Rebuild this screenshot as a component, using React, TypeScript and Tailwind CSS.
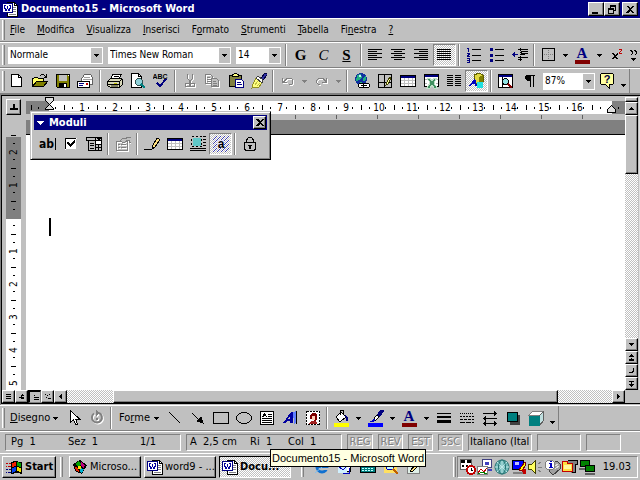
import React from "react";

type Kids = { children?: React.ReactNode };

const raised =
  "border border-t-white border-l-white border-r-black border-b-black shadow-[inset_-1px_-1px_0_#808080]";
const sunken = "border border-t-[#808080] border-l-[#808080] border-r-white border-b-white";
const dither =
  "bg-[conic-gradient(#fff_25%,#c0c0c0_0_50%,#fff_0_75%,#c0c0c0_0)] bg-[length:2px_2px]";

function Svg({ children, w = 16, h = 16 }: Kids & { w?: number; h?: number }) {
  return (
    <svg
      width={w}
      height={h}
      viewBox={`0 0 ${w} ${h}`}
      fill="none"
      shapeRendering="crispEdges"
      className="block shrink-0"
      aria-hidden="true"
    >
      {children}
    </svg>
  );
}

/* Shape drawn in grey with a white lower-right echo, as unavailable commands are. */
function Etched({ children }: Kids) {
  return (
    <>
      <g transform="translate(1 1)" className="text-white">
        {children}
      </g>
      <g className="text-[#808080]">{children}</g>
    </>
  );
}

function Tool({ label, pressed, disabled, children }: Kids & { label: string; pressed?: boolean; disabled?: boolean }) {
  return (
    <button
      type="button"
      aria-label={label}
      aria-pressed={pressed}
      disabled={disabled}
      className={`flex h-[22px] w-[23px] shrink-0 items-center justify-center ${pressed ? `${sunken} ${dither}` : ""}`}
    >
      {children}
    </button>
  );
}

function Down({ grey }: { grey?: boolean }) {
  return (
    <Svg w={5} h={3}>
      <path d="M0 0h5v1H4v1H3v1H2V2H1V1H0z" fill={grey ? "#808080" : "#000"} />
    </Svg>
  );
}

function More({ label, grey }: { label: string; grey?: boolean }) {
  return (
    <button type="button" aria-label={label} disabled={grey} className="flex h-[22px] w-[11px] shrink-0 items-center justify-center">
      <Down grey={grey} />
    </button>
  );
}

function Sep() {
  return <div className="mx-0.5 h-[22px] w-0.5 shrink-0 border-l border-r border-l-[#808080] border-r-white" />;
}

function Grip() {
  return <div className="h-5 w-[3px] shrink-0 border-l border-r border-l-white border-r-[#808080]" />;
}

function Bar({ label, children }: Kids & { label: string }) {
  return (
    <div
      role="toolbar"
      aria-label={label}
      className="flex h-[26px] shrink-0 items-center border-t border-b border-t-white border-b-[#808080] pl-0.5"
    >
      {children}
    </div>
  );
}

function Combo({ label, value, width }: { label: string; value: string; width: string }) {
  return (
    <div className={`flex h-[17px] shrink-0 items-center bg-white p-px ${width}`}>
      <select
        aria-label={label}
        className="h-[15px] min-w-0 flex-1 appearance-none bg-white pl-px text-[10px] leading-[14px] outline-none"
        defaultValue={value}
      >
        <option>{value}</option>
      </select>
      <span className="pointer-events-none flex h-[15px] w-[11px] items-center justify-center bg-[#c0c0c0]">
        <Down />
      </span>
    </div>
  );
}

function WordIcon() {
  return (
    <Svg>
      <path d="M5.5 1.5h7l3 3v11h-10z" fill="#fff" stroke="#000" />
      <path d="M12.5 1v3.5h3" stroke="#000" />
      <path d="M11 6.5h3M11 8.5h3M11 10.5h3M7 13.5h7" stroke="#808080" />
      <path d="M.5 2.5h10v9H.5z" fill="#fff" stroke="#000080" />
      <path d="M2 4h2v1h-1v2h1v1h1V5h1v3h1V7h1V5H7V4h2v1H9v3H8v2H6V8H5v2H3V8H2z" fill="#0000a0" />
    </Svg>
  );
}

/* ---------- alignment and list glyphs ---------- */

function Lines({ rows }: { rows: [number, number][] }) {
  return (
    <Svg w={15} h={12}>
      {rows.map(([x, w], i) => (
        <rect key={i} x={x} y={i * 2} width={w} height={1} fill="#000" />
      ))}
    </Svg>
  );
}

function FontColour() {
  return (
    <Svg w={17} h={17}>
      <text x="8" y="11" textAnchor="middle" fontFamily="Liberation Serif, serif" fontWeight="bold" fontSize="15" fill="#000080">A</text>
      <rect x="1" y="13" width="15" height="4" fill="#800000" />
    </Svg>
  );
}

function GridTable() {
  return (
    <Svg>
      <path d="M.5 2.5h15v11H.5z" fill="#fff" stroke="#000" />
      <path d="M1 3h14v2H1z" fill="#000080" />
      <path d="M1 7.5h14M1 10.5h14M4.5 5v8M8.5 5v8M12.5 5v8" stroke="#c0c0c0" />
    </Svg>
  );
}

/* ---------- window parts ---------- */

function CaptionButton({ label, children }: Kids & { label: string }) {
  return (
    <button type="button" aria-label={label} className={`flex h-[14px] w-4 items-center justify-center bg-[#c0c0c0] ${raised}`}>
      {children}
    </button>
  );
}

function TitleBar() {
  return (
    <header className="flex h-[18px] shrink-0 items-center bg-[#000080] pr-0.5 pl-0.5 text-white">
      <WordIcon />
      <h1 className="ml-[3px] flex-1 text-[11px] leading-[14px] font-bold">Documento15 - Microsoft Word</h1>
      <CaptionButton label="Riduci a icona">
        <Svg w={10} h={9}><path d="M1 7h6v2H1z" fill="#000" /></Svg>
      </CaptionButton>
      <CaptionButton label="Ripristina">
        <Svg w={10} h={9}><path d="M3 0h6v6H7V5h1V2H4v1H3zM1 3h6v6H1zm1 2v3h4V5z" fill="#000" fillRule="evenodd" /></Svg>
      </CaptionButton>
      <div className="w-0.5" />
      <CaptionButton label="Chiudi">
        <Svg w={10} h={9}><path d="M1 1h2l2 2 2-2h2L6 4l3 4H7L5 6 3 8H1l3-4z" fill="#000" /></Svg>
      </CaptionButton>
    </header>
  );
}

const menus: [string, string, string][] = [
  ["", "F", "ile"],
  ["", "M", "odifica"],
  ["", "V", "isualizza"],
  ["", "I", "nserisci"],
  ["F", "o", "rmato"],
  ["", "S", "trumenti"],
  ["", "T", "abella"],
  ["Fi", "n", "estra"],
  ["", "?", ""],
];

function MenuBar() {
  return (
    <nav className="flex h-6 shrink-0 items-center border-t border-b border-t-white border-b-[#808080] pl-0.5">
      <Grip />
      <div className="ml-[5px] flex gap-3">
        {menus.map(([a, b, c]) => (
          <button key={a + b + c} type="button" className="leading-[14px]">
            {a}
            <u className="underline-offset-1">{b}</u>
            {c}
          </button>
        ))}
      </div>
    </nav>
  );
}

function FormatBar() {
  return (
    <Bar label="Formattazione">
      <Grip />
      <div className="mr-0.5 ml-[3px] flex gap-[5px]">
        <Combo label="Stile" value="Normale" width="w-[95px]" />
        <Combo label="Tipo di carattere" value="Times New Roman" width="w-[123px]" />
        <Combo label="Dimensione carattere" value="14" width="w-[45px]" />
      </div>
      <Sep />
      <Tool label="Grassetto"><b className="font-['Liberation_Serif',serif] text-[15px] leading-4">G</b></Tool>
      <Tool label="Corsivo"><i className="font-['Liberation_Serif',serif] text-[15px] leading-4">C</i></Tool>
      <Tool label="Sottolineato"><b className="font-['Liberation_Serif',serif] text-[15px] leading-4 underline">S</b></Tool>
      <Sep />
      <Tool label="Allinea a sinistra"><Lines rows={[[0, 14], [0, 9], [0, 14], [0, 9], [0, 14], [0, 9]]} /></Tool>
      <Tool label="Centra"><Lines rows={[[0, 14], [3, 8], [0, 14], [3, 8], [0, 14], [3, 8]]} /></Tool>
      <Tool label="Allinea a destra"><Lines rows={[[0, 14], [5, 9], [0, 14], [5, 9], [0, 14], [5, 9]]} /></Tool>
      <Tool label="Giustifica" pressed><Lines rows={[[0, 14], [0, 14], [0, 14], [0, 14], [0, 14], [0, 14]]} /></Tool>
      <Sep />
      <Tool label="Elenco numerato">
        <Svg>
          <path d="M6 2.5h9M6 8.5h9M6 13.5h9" stroke="#000" />
          <path d="M1 1h2v4H2V2H1zM1 6h3v2H3v1h1v1H1V8h1V7H1zM1 11h3v5H1v-1h2v-1H1v-1h2v-1H1z" fill="#000080" />
        </Svg>
      </Tool>
      <Tool label="Elenco puntato">
        <Svg>
          <path d="M6 2.5h9M6 8.5h9M6 13.5h9" stroke="#000" />
          <path d="M1 1h3v3H1zM1 7h3v3H1zM1 12h3v3H1z" fill="#000080" />
        </Svg>
      </Tool>
      <Tool label="Riduci rientro">
        <Svg>
          <path d="M6 2.5h10M9 4h7v2H9zM6 10.5h10M9 7.5h4M6 12.5h4" stroke="#000" />
          <path d="M8.500 1v14" stroke="#000" strokeDasharray="1 1" />
          <path d="M0 7h1V6h1V5h1v2h3v1H3v2H2V9H1V8H0z" fill="#000080" />
        </Svg>
      </Tool>
      <Sep />
      <Tool label="Bordo esterno">
        <Svg>
          <path d="M1.5 1.5h12v12h-12z" stroke="#000" />
          <path d="M7.5 3v10M3 7.5h10" stroke="#808080" strokeDasharray="1 1" />
        </Svg>
      </Tool>
      <More label="Altri bordi" />
      <Tool label="Colore carattere"><FontColour /></Tool>
      <More label="Altri colori carattere" />
      <Tool label="Apice">
        <Svg>
          <path d="M2 6h2l2 2 2-2h1v1L7 9l2 3H7l-1-2-2 2H2l3-3z" fill="#000" />
          <path d="M10 3V2h3v2h-1v1h-1v1h2v1h-3V5h1V4h1V3z" fill="#c00000" />
        </Svg>
      </Tool>
      <button type="button" aria-label="Altri pulsanti" className="flex w-[11px] flex-col items-center gap-[3px]">
        <Svg w={8} h={5}><path d="M0 0h1l2 2v1L1 5H0l2-2zM4 0h1l2 2v1L5 5H4l2-2z" fill="#000" /></Svg>
        <Down />
      </button>
    </Bar>
  );
}

function StandardBar() {
  return (
    <Bar label="Standard">
      <Grip />
      <Tool label="Nuovo">
        <Svg>
          <path d="M2.5 1.5h7l3 3v9h-10z" fill="#fff" stroke="#000" />
          <path d="M9.5 1.5v3h3" stroke="#000" />
        </Svg>
      </Tool>
      <Tool label="Apri">
        <Svg>
          <path d="M.5 13.5v-8h1l1-1h3l1 1h5v3" fill="#ff6" stroke="#000" />
          <path d="M.5 13.5l4-5h11l-4 5z" fill="#808000" stroke="#000" />
          <path d="M8 2h1V1h3v1h1v1h1V1h1v4h-3V4h1V3h-1V2H9v1H8z" fill="#000" />
        </Svg>
      </Tool>
      <Tool label="Salva">
        <Svg>
          <path d="M1.5 1.5h13v13h-12l-1-1z" fill="#808000" stroke="#000" />
          <path d="M4 2h8v6H4z" fill="#c0c0c0" />
          <path d="M4 10h8v5H4z" fill="#000" />
          <path d="M9 11h2v3H9zM13 2h1v1h-1z" fill="#fff" />
        </Svg>
      </Tool>
      <Tool label="Posta elettronica">
        <Svg w={17}>
          <path d="M4.5 6l3-4.5h6l2 3v7h-11z" fill="#fff" stroke="#606060" />
          <path d="M7 4.5h6M6 6.5h9" stroke="#a0a0a0" />
          <path d="M.5 8.5h12v6H.5z" fill="#fff" stroke="#000" />
          <path d="M2 10.5h5M2 12.5h4" stroke="#000080" />
          <path d="M9 10h2v2H9z" fill="#c00000" />
        </Svg>
      </Tool>
      <Sep />
      <Tool label="Stampa">
        <Svg>
          <path d="M4 6l2-5h8l-2 5z" fill="#fff" />
          <path d="M3.5 6l2.500-4.500h8l-2 4.500" stroke="#000" />
          <path d="M7 3.5h5" stroke="#000" />
          <path d="M.5 8.5l3-3h11l1 2v4l-3 3h-9l-3-2z" fill="#d8d8b8" stroke="#000" />
          <path d="M1 8.5h11v5M12 8.5l3-2M1 11.5h11" stroke="#000" />
          <path d="M7 10h3v1H7z" fill="#c0c000" />
          <path d="M4 12h7v2H4z" fill="#808060" />
        </Svg>
      </Tool>
      <Tool label="Anteprima di stampa">
        <Svg>
          <path d="M1.5.5h7l3 3v11h-10z" fill="#fff" stroke="#000" />
          <path d="M8.5.5v3h3" stroke="#000" />
          <circle cx="9" cy="9" r="3.5" fill="#8fd0d8" stroke="#305050" />
          <path d="M11 11l4 4" stroke="#008080" strokeWidth="2" />
        </Svg>
      </Tool>
      <Tool label="Controllo ortografia">
        <Svg>
          <text x="7" y="6" textAnchor="middle" fontFamily="Liberation Sans, sans-serif" fontWeight="bold" fontSize="7" fill="#000">ABC</text>
          <path d="M4 10l3 3 6-7" stroke="#000080" strokeWidth="2" />
        </Svg>
      </Tool>
      <Sep />
      <Tool label="Taglia" disabled>
        <Svg>
          <Etched>
            <path d="M5.5 1v4l4 6M10.5 1v4l-4 6" stroke="currentColor" />
            <circle cx="5.5" cy="12" r="2" stroke="currentColor" />
            <circle cx="10.5" cy="12" r="2" stroke="currentColor" />
          </Etched>
        </Svg>
      </Tool>
      <Tool label="Copia" disabled>
        <Svg>
          <Etched>
            <path d="M.5 1.5h5l2 2v7h-7zM2 4.5h3M2 6.5h4M2 8.5h4" stroke="currentColor" />
            <path d="M6.5 5.5h5l2 2v6h-7z" fill="#c0c0c0" stroke="currentColor" />
            <path d="M8 8.5h3M8 10.5h4M8 12.5h4" stroke="currentColor" />
          </Etched>
        </Svg>
      </Tool>
      <Tool label="Incolla">
        <Svg>
          <path d="M1.5 2.5h12v11h-12z" fill="#808040" stroke="#000" />
          <path d="M4.5 3.5v-2h1l1-1h2l1 1h1v2z" fill="#ffff80" stroke="#000" />
          <path d="M7.5 6.5h6l2 2v6h-8z" fill="#fff" stroke="#000080" />
          <path d="M9 9.5h4M9 11.5h5" stroke="#000080" />
        </Svg>
      </Tool>
      <Tool label="Copia formato">
        <Svg>
          <path d="M14 0h2v2l-4 5-2-2z" fill="#3030a0" stroke="#000040" />
          <path d="M5 5l6 5-3 4-7 1 1-4z" fill="#ffff80" stroke="#909020" />
          <path d="M7 3l5 4-1 3-6-5z" fill="#fff" stroke="#404040" />
          <path d="M4 12l3-4M6 13l3-3" stroke="#c0c040" />
        </Svg>
      </Tool>
      <Sep />
      <Tool label="Annulla" disabled>
        <Svg>
          <Etched><path d="M2 5h1v3l3-3h5l2 2v3l-2 2H9v-1h2l1-1V7l-1-1H7L4 9h3v1H2z" fill="currentColor" /></Etched>
        </Svg>
      </Tool>
      <More label="Elenco annulla" grey />
      <Tool label="Ripeti" disabled>
        <Svg>
          <Etched><path d="M13 5h-1v3L9 5H4L2 7v3l2 2h2v-1H4l-1-1V7l1-1h4l3 3H8v1h5z" fill="currentColor" /></Etched>
        </Svg>
      </Tool>
      <More label="Elenco ripeti" grey />
      <Sep />
      <Tool label="Inserisci collegamento ipertestuale">
        <Svg>
          <circle cx="7" cy="6" r="6" fill="#1030a0" />
          <path d="M3 2l4-1 1 3-3 3-3 1zM9 5l3-2v4l-3 1zM6 9l3 1-2 2z" fill="#20b080" />
          <path d="M5 2h2v2H5z" fill="#c0f0ff" />
          <rect x="4.5" y="10.5" width="6" height="4" rx="2" fill="#fff" stroke="#000" />
          <rect x="9.5" y="10.5" width="6" height="4" rx="2" fill="#fff" stroke="#000" />
          <path d="M7 12.5h6" stroke="#000" />
        </Svg>
      </Tool>
      <Tool label="Tabelle e bordi">
        <Svg>
          <path d="M1.5 1.5h13v13h-13zM7.5 2v12M2 9.5h12" stroke="#000" />
          <path d="M9 12l1-3 3-5 1 1-3 6z" fill="#ffffa0" stroke="#404000" />
        </Svg>
      </Tool>
      <Tool label="Inserisci tabella"><GridTable /></Tool>
      <Tool label="Inserisci foglio di Microsoft Excel">
        <Svg>
          <path d="M1.5 1.5h14v12h-14z" fill="#fff" stroke="#000" />
          <path d="M2 2h13v2H2z" fill="#000080" />
          <path d="M2 6.5h2M2 10.5h2M13 6.500h2M13 10.500h2" stroke="#b0b0b0" />
          <path d="M4 5h3l2 3 2-3h3l-3 5 3 5h-3l-2-3-2 3H4l3-5z" fill="#409060" stroke="#c0e0c8" />
        </Svg>
      </Tool>
      <Tool label="Colonne">
        <Svg>
          <path d="M1 2.5h6M1 4.5h6M1 6.5h6M1 8.5h6M1 10.5h6M1 12.5h6M9 2.5h6M9 4.5h6M9 6.5h6M9 8.5h6M9 10.5h6M9 12.5h6" stroke="#000" />
        </Svg>
      </Tool>
      <Tool label="Disegno" pressed>
        <Svg>
          <path d="M5 2l5-2 4 2v7l-5 2-4-2z" fill="#e0d840" stroke="#606000" />
          <path d="M10 4l4-2v7l-4 2z" fill="#808000" />
          <path d="M0 13L6 5l2 8H6v-2H3l-1 2z" fill="#0000c0" />
          <circle cx="11" cy="12" r="3.5" fill="#20e0e0" />
        </Svg>
      </Tool>
      <Sep />
      <Tool label="Mappa documento">
        <Svg>
          <path d="M.5 1.5h14v13H.5z" fill="#fff" stroke="#000" />
          <path d="M1 2h13v2H1z" fill="#000080" />
          <path d="M4.5 4v10" stroke="#000" />
          <circle cx="7.5" cy="8.5" r="3" fill="#8fe0e0" stroke="#000" />
          <path d="M10 11l4 4" stroke="#800000" strokeWidth="2" />
        </Svg>
      </Tool>
      <Tool label="Mostra/Nascondi">
        <Svg><path d="M5 2h9v1h-1v11h-1V3h-2v11H9V8H6V7H5V6H4V3h1z" fill="#000" /></Svg>
      </Tool>
      <div className="ml-[3px]">
        <Combo label="Zoom" value="87%" width="w-[52px]" />
      </div>
      <Tool label="Guida in linea">
        <Svg>
          <path d="M2.5.5h11l1 1v9l-1 1h-3v4l-4-4h-4l-1-1v-9z" fill="#ffffa0" stroke="#000" />
          <text x="8" y="10" textAnchor="middle" fontFamily="Liberation Sans, sans-serif" fontWeight="bold" fontSize="11" fill="#000040">?</text>
        </Svg>
      </Tool>
      <div className="mt-2"><More label="Opzioni barra Standard" /></div>
      <div className="h-full w-px bg-[#808080]" />
    </Bar>
  );
}

/* ---------- rulers ---------- */

function HorizontalRuler() {
  return (
    <div className="relative mt-[5px] flex h-[13px] shrink-0 bg-white text-[10px]">
      <div className="flex w-[23px] shrink-0 items-center justify-around bg-[#808080] pl-0.5">
        <i className="h-[5px] w-px bg-black" />
        <i className="h-0.5 w-px bg-black" />
        <i className="w-px" />
      </div>
      <div className="flex min-w-0 flex-1 overflow-hidden">
        {Array.from({ length: 17 }, (_, i) => (
          <div key={i} className="flex w-[33px] shrink-0 items-center">
            <i className="ml-1.5 h-0.5 w-px shrink-0 bg-black" />
            <i className="ml-2 h-[5px] w-px shrink-0 bg-black" />
            <i className="ml-[7px] h-0.5 w-px shrink-0 bg-black" />
            <span className="-mr-3 ml-px flex w-4 shrink-0 justify-center leading-[13px]">{i < 16 ? i + 1 : ""}</span>
          </div>
        ))}
      </div>
      <div className="flex w-[13px] shrink-0 items-center justify-center bg-[#808080]">
        <i className="h-0.5 w-px bg-black" />
      </div>
      <div className="absolute -top-1 left-[18px]">
        <Svg w={11} h={16}>
          <path d="M1.5.5h8v3l-4 4-4-4z" fill="#e0e0e0" stroke="#000" />
          <path d="M5.5 7.5l4 4v1h-8v-1z" fill="#e0e0e0" stroke="#000" />
        </Svg>
      </div>
      <div className="absolute top-1 right-2">
        <Svg w={10} h={9}><path d="M4.5.5l4 4v3h-8v-3z" fill="#e0e0e0" stroke="#000" /></Svg>
      </div>
    </div>
  );
}

function VerticalMarks({ labels, pad }: { labels: string[]; pad: string }) {
  return (
    <div className={`flex flex-col items-center text-[10px] ${pad}`}>
      {labels.map((n, i) => (
        <div key={i} className="flex h-[33px] w-full shrink-0 flex-col items-center">
          <i className="mt-1.5 h-px w-0.5 shrink-0 bg-black" />
          <i className="mt-2 h-px w-[5px] shrink-0 bg-black" />
          <i className="mt-[7px] h-px w-0.5 shrink-0 bg-black" />
          <span className="mt-[3px] h-2.5 w-3 shrink-0 -rotate-90 text-center leading-[10px]">{n}</span>
        </div>
      ))}
    </div>
  );
}

function LeftColumn() {
  return (
    <div className="flex w-6 shrink-0 flex-col overflow-hidden pt-[3px] pr-[5px] pl-1">
      <button type="button" aria-label="Tabulazione" className={`flex h-4 shrink-0 items-center justify-center ${raised}`}>
        <Svg w={8} h={6}><path d="M3 0h2v4h3v2H0V4h3z" fill="#000" /></Svg>
      </button>
      <div className="flex h-[22px] shrink-0 items-end justify-center pb-px">
        <i className="h-px w-[5px] bg-black" />
      </div>
      <div className="h-[82px] shrink-0 overflow-hidden bg-[#808080]">
        <VerticalMarks labels={["2", "1", ""]} pad="-mt-[17px]" />
      </div>
      <div className="min-h-0 flex-1 overflow-hidden bg-white">
        <VerticalMarks labels={["1", "2", "3", "4", "5"]} pad="" />
      </div>
    </div>
  );
}

/* ---------- scroll bars ---------- */

function ScrollButton({ label, d, pressed }: { label: string; d: string; pressed?: boolean }) {
  return (
    <button
      type="button"
      aria-label={label}
      className={`flex h-[13px] w-[13px] shrink-0 items-center justify-center bg-[#c0c0c0] ${pressed ? "border-2 border-r border-b border-black border-r-[#808080] border-b-[#808080]" : raised}`}
    >
      <Svg w={7} h={7}><path d={d} fill="#000" /></Svg>
    </button>
  );
}

function VerticalScroll() {
  return (
    <div className="flex w-[15px] shrink-0 flex-col border-r border-[#e0e0e0] pr-px">
      <div className={`mt-px h-[5px] shrink-0 ${raised}`} />
      <ScrollButton label="Scorri su" d="M3 2h1v1h1v1h1v1H1V4h1V3h1z" />
      <div className={`h-[59px] shrink-0 bg-[#c0c0c0] ${raised}`} />
      <div className={`min-h-0 flex-1 ${dither}`} />
      <ScrollButton label="Scorri giù" d="M1 2h5v1H5v1H4v1H3V4H2V3H1z" />
      <ScrollButton label="Pagina precedente" d="M3 0h1v1h1v1h1v1H1V2h1V1h1zM3 4h1v1h2v2H1V5h2z" />
      <ScrollButton label="Seleziona oggetto da sfogliare" d="M5 1h1v4H5v1H1V5h3V4h1z" />
      <ScrollButton label="Pagina successiva" d="M1 1h5v1H4v2h2v1H5v1H4v1H3V6H2V5H1V4h2V2H1z" />
    </div>
  );
}

function HorizontalScroll() {
  return (
    <div className="flex h-[13px] shrink-0">
      <ScrollButton label="Visualizzazione Normale" d="M1 1h5v1H1zM1 3h5v1H1zM1 5h5v1H1z" />
      <ScrollButton label="Visualizzazione Web" d="M4 1h1v1h1v1H4v1h2v2H3V5H1V4h2V2h1z" />
      <ScrollButton label="Layout di stampa" pressed d="M2 1h1v1H2zM2 3h5v1H2zM2 5h5v1H2z" />
      <ScrollButton label="Visualizzazione Struttura" d="M1 1h1v1H1zM3 2h1v1H3zM5 1h1v1H5zM2 4h1v1H2zM4 5h3v1H4z" />
      <ScrollButton label="Scorri a sinistra" d="M4 1h1v5H4V5H3V4H2V3h1V2h1z" />
      <div className={`w-[46px] shrink-0 ${dither}`} />
      <div className={`min-w-0 flex-1 bg-[#c0c0c0] ${raised}`} />
      <div className={`w-[54px] shrink-0 ${dither}`} />
      <ScrollButton label="Scorri a destra" d="M2 1h1v1h1v1h1v1H4v1H3v1H2z" />
      <div className="w-[15px] shrink-0" />
    </div>
  );
}

/* ---------- floating forms palette ---------- */

function FormsPalette() {
  return (
    <section aria-label="Moduli" className="absolute top-[15px] left-7 flex h-[49px] w-[241px] flex-col border border-t-[#c0c0c0] border-l-[#c0c0c0] border-r-black border-b-black bg-[#c0c0c0] p-0.5 shadow-[inset_1px_1px_0_#fff,inset_-1px_-1px_0_#808080]">
      <div className="m-px flex h-[15px] shrink-0 items-center bg-[#000080] pr-px pl-[3px] text-white">
        <Svg w={7} h={4}><path d="M0 0h7v1H6v1H5v1H4v1H3V3H2V2H1V1H0z" fill="#fff" /></Svg>
        <h2 className="ml-[5px] flex-1 text-[11px] leading-[14px] font-bold">Moduli</h2>
        <button type="button" aria-label="Chiudi Moduli" className={`flex h-[13px] w-[13px] items-center justify-center bg-[#c0c0c0] ${raised}`}>
          <Svg w={8} h={7}><path d="M0 0h2l2 2 2-2h2L5 3.5 8 7H6L4 5 2 7H0l3-3.5z" fill="#000" /></Svg>
        </button>
      </div>
      <div role="toolbar" aria-label="Controlli modulo" className="flex flex-1 items-center pl-[3px]">
        <Tool label="Campo testo"><span className="flex text-[12px] leading-4"><b>ab</b><i className="mt-0.5 ml-px h-3 w-px shrink-0 bg-black" /></span></Tool>
        <Tool label="Casella di controllo">
          <Svg>
            <path d="M2 2h12v12H2z" fill="#fff" />
            <path d="M2.5 13V2.5H13" stroke="#000" />
            <path d="M13.5 3v10.5H3" stroke="#c0c0c0" />
            <path d="M4 6h1l2 2 4-4h1v3l-5 4-3-3z" fill="#000" />
          </Svg>
        </Tool>
        <Tool label="Casella di riepilogo">
          <Svg>
            <path d="M.5 1.5h15v3H.5zM2.5 4.5h13v10h-13zM9.5 1v13M9 8.5h6M9 11.5h6M12.5 9v5" stroke="#000" />
            <path d="M11 2h4v1h-1v1h-2V3h-1zM4 7h4v1H4zM4 9h4v1H4zM4 12h4v1H4z" fill="#000" />
            <path d="M10 5h5v3h-5z" fill="#fff" />
          </Svg>
        </Tool>
        <Sep />
        <Tool label="Opzioni campo modulo" disabled>
          <Svg>
            <Etched>
              <path d="M1.5 5.5h11v9h-11zM3 8.5h2M3 11.5h2M6 8.5h5M6 11.5h5" stroke="currentColor" />
              <path d="M5 5l3-3h3V1h5v5h-2V4h-2l-3 3z" fill="#c0c0c0" stroke="currentColor" />
            </Etched>
          </Svg>
        </Tool>
        <Sep />
        <Tool label="Disegna tabella">
          <Svg>
            <path d="M0 13.5h8" stroke="#000" />
            <path d="M8 13l1-4 4-7 2 1v2l-4 6z" fill="#ffe080" stroke="#000" />
          </Svg>
        </Tool>
        <Tool label="Inserisci tabella modulo"><GridTable /></Tool>
        <Tool label="Inserisci cornice">
          <Svg>
            <path d="M3 2h8v8H3z" fill="#60c8c8" />
            <path d="M1.5.5h10v10h-10z" stroke="#000" strokeDasharray="2 2" />
            <path d="M13 .5h3M13 3.5h3M13 6.5h3M13 9.5h3M0 12.5h16M0 14.5h16" stroke="#000" />
          </Svg>
        </Tool>
        <Tool label="Ombreggiatura campi" pressed>
          <Svg>
            <path d="M0 4l4-4M0 8l8-8M0 12L12 0M0 16L16 0M4 16L16 4M8 16l8-8M12 16l4-4" stroke="#4040b0" />
            <path d="M4 4h7v8H4z" fill="#e0e0f8" />
            <text x="8" y="12" textAnchor="middle" fontFamily="Liberation Sans, sans-serif" fontWeight="bold" fontSize="12" fill="#000">a</text>
          </Svg>
        </Tool>
        <Sep />
        <Tool label="Proteggi modulo">
          <Svg>
            <path d="M4.5 7V4l2-2.5h3l2 2.5v3" stroke="#000" />
            <path d="M2.5 6.5h11v6l-1 2h-9l-1-2z" stroke="#000" />
            <path d="M6 9h4v1H9v3H7v-3H6z" fill="#000" />
          </Svg>
        </Tool>
      </div>
    </section>
  );
}

function Workspace() {
  return (
    <div className="flex min-h-0 flex-1 flex-col border-t border-l border-[#808080] pb-px">
      <div className="relative flex min-h-0 flex-1 flex-col border-t border-b border-l border-black">
        <div className="flex min-h-0 flex-1">
          <LeftColumn />
          <div className="flex min-w-0 flex-1 flex-col">
            <HorizontalRuler />
            <div className="flex h-1.5 shrink-0 items-center gap-10 overflow-hidden pl-16">
              {Array.from({ length: 13 }, (_, i) => (
                <i key={i} className="h-1 w-px shrink-0 bg-[#606060]" />
              ))}
            </div>
            <div className="h-[14px] shrink-0 bg-[#808080]" />
            <div
              role="textbox"
              aria-multiline="true"
              aria-label="Documento"
              tabIndex={0}
              className="min-h-0 flex-1 border-t border-black bg-white pt-[83px] pl-[23px] outline-none"
            >
              <div className="h-[18px] w-0.5 bg-black" />
            </div>
          </div>
          <VerticalScroll />
        </div>
        <HorizontalScroll />
        <FormsPalette />
      </div>
    </div>
  );
}

function DrawingBar() {
  return (
    <Bar label="Disegno">
      <Grip />
      <button type="button" className="flex w-[57px] shrink-0 items-center justify-between pr-1 pl-[5px] text-[11px] leading-[14px]">
        <span><u className="underline-offset-1">D</u>isegno</span>
        <Down />
      </button>
      <Tool label="Seleziona oggetti">
        <Svg><path d="M4.5.5v12l3-3 2 5h2l-2-5.5h4z" fill="#fff" stroke="#000" /></Svg>
      </Tool>
      <Tool label="Rotazione libera" disabled>
        <Svg>
          <Etched>
            <path d="M10 3a5 5 0 1 1-5 .5" stroke="currentColor" strokeWidth="2" shapeRendering="auto" />
            <path d="M7 0v6l4-3zM7 8h2v2H7z" fill="currentColor" />
          </Etched>
        </Svg>
      </Tool>
      <Sep />
      <button type="button" className="flex w-[49px] shrink-0 items-center justify-between pr-1 pl-[5px] text-[11px] leading-[14px]">
        <span>Fo<u className="underline-offset-1">r</u>me</span>
        <Down />
      </button>
      <Tool label="Linea"><Svg><path d="M2.5 2.5l11 11" stroke="#000" /></Svg></Tool>
      <Tool label="Freccia">
        <Svg><path d="M2 3l8 8" stroke="#000" /><path d="M7 11l4-4 2 6z" fill="#000" stroke="#000" /></Svg>
      </Tool>
      <Tool label="Rettangolo"><Svg><path d="M.5 2.5h15v11H.5z" stroke="#000" /></Svg></Tool>
      <Tool label="Ovale"><Svg><ellipse cx="8" cy="8" rx="7.5" ry="5.5" stroke="#000" /></Svg></Tool>
      <Tool label="Casella di testo">
        <Svg>
          <path d="M1.5 1.5h13v13h-13z" fill="#fff" stroke="#000" />
          <path d="M9 4.5h4M9 6.5h4M3 8.5h10M3 10.5h10M3 12.5h10" stroke="#000" />
          <path d="M3 7l2-4h1l2 4H7L6 6H5L4 7z" fill="#000" />
        </Svg>
      </Tool>
      <Tool label="Inserisci WordArt">
        <Svg>
          <path d="M1 13L9 2h2v11H8v-2H5l-1 2zM6 9h2V6z" fill="#0000a0" fillRule="evenodd" />
          <path d="M11 2l3-1v12l-2 1z" fill="#6080ff" />
          <path d="M14.5 1v13" stroke="#000" />
        </Svg>
      </Tool>
      <Tool label="Inserisci ClipArt">
        <Svg>
          <path d="M1 1h14v14H1z" fill="#fff" />
          <path d="M1.5 1.5h13v13h-13z" stroke="#000" strokeDasharray="2 1" />
          <path d="M5 5l2-2h3l2 2v4l-1 2H9v-1h1V6H7v3H5z" fill="#800000" />
          <path d="M7 6h3v4H7z" fill="#ffd0b8" />
          <path d="M4 14v-1l3-2h3l2 2v1z" fill="#a02020" />
        </Svg>
      </Tool>
      <Sep />
      <Tool label="Colore riempimento">
        <Svg w={17} h={17}>
          <path d="M3 7l5-5 5 5-5 4H6z" fill="#fff" stroke="#000" />
          <path d="M7.5 5V1l2-1 1 1v3" stroke="#000" />
          <path d="M12 5l3 2v4h-2V8z" fill="#000080" />
          <rect x="1" y="13" width="15" height="4" fill="#ff0" />
        </Svg>
      </Tool>
      <More label="Altri riempimenti" />
      <Tool label="Colore linea">
        <Svg w={17} h={17}>
          <path d="M14 0h2v2l-4 5-2-2z" fill="#000080" stroke="#000080" />
          <path d="M10 5l2 2-3 3H7V8z" fill="#fff" stroke="#000" />
          <path d="M2 11h2l2-2h2v1l-2 2H3z" fill="#0000c0" />
          <rect x="1" y="13" width="15" height="4" fill="#00f" />
        </Svg>
      </Tool>
      <More label="Altri colori linea" />
      <Tool label="Colore carattere disegno"><FontColour /></Tool>
      <More label="Altri colori testo" />
      <Tool label="Stile linea"><Svg><path d="M1 3h14v1H1zM1 6h14v2H1zM1 10h14v3H1z" fill="#000" /></Svg></Tool>
      <Tool label="Stile tratteggio">
        <Svg>
          <path d="M1 3.5h14" stroke="#000" strokeDasharray="1 1" />
          <path d="M1 6.5h14" stroke="#000" strokeDasharray="2 1" />
          <path d="M1 9.5h14" stroke="#000" strokeDasharray="3 1" />
          <path d="M1 12.5h14" stroke="#000" strokeDasharray="5 1" />
        </Svg>
      </Tool>
      <Tool label="Stile freccia">
        <Svg>
          <path d="M1 3.5h14M1 8.5h14M1 13.5h14" stroke="#000" />
          <path d="M12 1h1v1h1v1h1v1h-1v1h-1v1h-1zM4 6H3v1H2v1H1v1h1v1h1v1h1zM12 11h1v1h1v1h1v1h-1v1h-1v1h-1zM4 11H3v1H2v1H1v1h1v1h1v1h1z" fill="#000" />
        </Svg>
      </Tool>
      <Tool label="Ombreggiatura">
        <Svg>
          <path d="M5 5h10v10H5z" fill="#404040" />
          <path d="M2.5 2.5h10v9h-10z" fill="#008080" stroke="#000" />
        </Svg>
      </Tool>
      <Tool label="3D">
        <Svg>
          <path d="M.5 5.5l4-4h11l-4 4z" fill="#fff" stroke="#808080" />
          <path d="M11.5 5.5l4-4v9l-4 5z" fill="#c0e0e0" stroke="#606060" />
          <path d="M.5 5.5h11v10H.5z" fill="#008080" />
        </Svg>
      </Tool>
      <div className="mt-2"><More label="Opzioni barra Disegno" /></div>
      <div className="h-full w-px bg-[#808080]" />
    </Bar>
  );
}

function Pane({ children, width }: Kids & { width: string }) {
  return <div className={`flex h-[17px] shrink-0 items-center overflow-hidden whitespace-pre ${sunken} ${width}`}>{children}</div>;
}

function Flag({ children, width }: Kids & { width: string }) {
  return (
    <Pane width={width}>
      <span className="w-full text-center text-[11px] text-[#808080] [text-shadow:1px_1px_0_#fff]">{children}</span>
    </Pane>
  );
}

function StatusBar() {
  return (
    <footer className="flex h-[22px] shrink-0 items-center gap-[5px] border-t border-white pl-[5px] text-[11px]">
      <Pane width="w-[176px]">
        <span className="w-14 pl-[5px]">Pg  1</span>
        <span className="flex-1 pl-1.5">Sez  1</span>
        <span className="pr-6">1/1</span>
      </Pane>
      <Pane width="w-[156px]">
        <span className="w-[59px] pl-[3px]">A  2,5 cm</span>
        <span className="w-[42px] pl-1">Ri  1</span>
        <span>Col  1</span>
      </Pane>
      <Flag width="w-[26px]">REG</Flag>
      <Flag width="w-[25px]">REV</Flag>
      <Flag width="w-[25px]">EST</Flag>
      <Flag width="w-[25px]">SSC</Flag>
      <Pane width="w-16"><span className="pl-px">Italiano (Ital</span></Pane>
      <Pane width="w-[44px]" />
      <Pane width="w-[35px]" />
    </footer>
  );
}

function Task({ label, active, children }: Kids & { label: string; active?: boolean }) {
  return (
    <button
      type="button"
      aria-pressed={active}
      className={`flex h-[22px] w-[72px] shrink-0 items-center gap-0.5 pl-0.5 text-[11px] whitespace-nowrap ${
        active ? `border border-t-black border-l-black border-r-white border-b-white font-bold ${dither}` : raised
      }`}
    >
      {children}
      <span>{label}</span>
    </button>
  );
}

function Launch({ label, children }: Kids & { label: string }) {
  return (
    <button type="button" aria-label={label} className="flex w-[23px] shrink-0 justify-center">
      <Svg>{children}</Svg>
    </button>
  );
}

function Tray() {
  return (
    <div className={`flex h-[22px] shrink-0 items-center pr-1.5 pl-0.5 ${sunken}`}>
      <div className="flex gap-px">
        <Svg>
          <path d="M.5.5h11v10H.5z" fill="#fff" stroke="#606060" />
          <path d="M1 1h4v3H1zM7 1h4v3H7zM2 6h2v2H2zM6 6h2v2H6z" fill="#000" />
          <circle cx="11" cy="11" r="4" fill="#fff" stroke="#c00000" strokeWidth="2" />
          <path d="M11 9v2h2" stroke="#000" />
        </Svg>
        <Svg>
          <path d="M5.5.5h9v8h-9z" fill="#fff" stroke="#404080" />
          <path d="M8 3h4v3H8zM7 10h8v2H7z" fill="#4040c0" />
          <path d="M.5 7.5h10v8H.5z" fill="#fff" stroke="#808080" />
          <path d="M1 14l3-4 3 3 3-4" stroke="#c00000" />
          <path d="M1 15l4-2 5 2" stroke="#008000" />
        </Svg>
        <Svg>
          <g shapeRendering="auto">
            <circle cx="8" cy="8" r="7" fill="#70b8b8" stroke="#207070" />
            <path d="M1 8h14M3 3l10 10M13 3L3 13M8 1v14" stroke="#c0e8e8" />
            <ellipse cx="8" cy="8" rx="3.5" ry="7" stroke="#207070" />
          </g>
        </Svg>
        <Svg>
          <path d="M1.5 1.5h11v9h-11z" fill="#00f" stroke="#000" />
          <path d="M4 3h4v3H4z" fill="#c0c0ff" />
          <path d="M2 13h11v2H2z" fill="#808080" />
          <path d="M8 11l6-8 1 2-4 7z" fill="#ffff00" stroke="#800000" />
          <path d="M11 10h4v5h-3z" fill="#c00000" />
        </Svg>
        <Svg w={15}>
          <path d="M.5 5.5h3l4-4v13l-4-4h-3z" fill="#ffff60" stroke="#404000" />
          <path d="M10 5l3-2M10 8h4M10 11l3 2" stroke="#808080" />
        </Svg>
        <Svg w={17}>
          <path d="M8 5l5-3 3 3v5l-7 6-4-4z" fill="#a0a0a0" stroke="#404040" />
          <path d="M10 8l4-3M11 10l4-3" stroke="#e0e0e0" />
          <circle cx="6" cy="6" r="5" fill="#fff" stroke="#808080" />
          <path d="M6 2h2v1H6zM5 4h3v4h1v1H5V8h1V5H5z" fill="#0000c0" />
        </Svg>
        <Svg>
          <path d="M5.5 1.5h10v4h-2v8h-4" fill="#808080" stroke="#000" />
          <path d="M.5 4.5v-2h5v2h5v8H.5z" fill="#ffe040" stroke="#c00000" />
          <path d="M2 6h7v4H2z" fill="#fff8a0" />
        </Svg>
        <Svg>
          <path d="M1.5 1.5h9v6h-9z" fill="#008000" stroke="#000" />
          <path d="M0 9h9v2H0z" fill="#606060" />
          <path d="M6.5 6.5h9v6h-9z" fill="#008000" stroke="#000" />
          <path d="M6 14h10v2H6z" fill="#606060" />
        </Svg>
      </div>
      <time className="ml-2 text-[11px]">19.03</time>
    </div>
  );
}

function TaskBar() {
  return (
    <div className="relative flex h-[27px] shrink-0 items-center border-t border-white pr-0.5 pl-0.5">
      <button type="button" className={`flex h-[22px] w-[54px] shrink-0 items-center gap-0.5 pl-[3px] text-[11px] font-bold ${raised}`}>
        <Svg w={17}>
          <path d="M5 3l3-1 8 1v12l-5-1-6 1z" fill="#000" />
          <path d="M6 4l4-1v4l-4 1z" fill="#f02000" />
          <path d="M11 3l4 1v4l-4-1z" fill="#00a000" />
          <path d="M6 9l4-1v4l-4 2z" fill="#0040f0" />
          <path d="M11 8l4 1v4l-4-1z" fill="#f0e000" />
          <path d="M0 4h2v1H0zM3 4h2v1H3zM0 7h1v1H0zM2 7h3v1H2z" fill="#c00000" />
          <path d="M0 10h2v1H0zM3 10h2v1H3zM0 13h1v1H0zM2 13h3v1H2z" fill="#000080" />
        </Svg>
        Start
      </button>
      <div className="mr-1.5 ml-1"><Grip /></div>
      <div className="flex gap-[3px]">
        <Task label="Microso...">
          <Svg>
            <path d="M1 5l7-4 7 5-5 9-7-3z" fill="#000" />
            <path d="M3 5l4-3 2 3-3 3z" fill="#00a000" />
            <path d="M9 3l4 3-1 3-3-2z" fill="#c00080" />
            <path d="M3 8l3 1 1 4-3-1z" fill="#e02000" />
            <path d="M8 9l4 1-2 4-2-1z" fill="#00b0d0" />
            <path d="M6 7h3v3H6z" fill="#ffe000" />
          </Svg>
        </Task>
        <Task label="word9 - ..."><WordIcon /></Task>
        <Task label="Docu..." active><WordIcon /></Task>
      </div>
      <div className="ml-2.5"><Grip /></div>
      <div className="ml-1.5 flex min-w-0 flex-1">
        <Launch label="Internet Explorer">
          <g shapeRendering="auto">
            <circle cx="8" cy="8" r="5" stroke="#1070d0" strokeWidth="3" />
            <path d="M4 8h10" stroke="#1070d0" strokeWidth="2" />
            <path d="M10 9h5v2h-5z" fill="#c0c0c0" />
            <path d="M1 14L15 2" stroke="#80c0f0" />
          </g>
        </Launch>
        <Launch label="Outlook Express">
          <path d="M3.5 1.5h10v11h-10z" fill="#fff" stroke="#000" />
          <path d="M1 7h9v7H1z" fill="#d0f0ff" />
          <path d="M1 7l5 4 4-4M6 14h6V9" stroke="#0000c0" />
        </Launch>
        <Launch label="Mostra desktop">
          <path d="M.5 4.5h15v9H.5z" fill="#008080" stroke="#000" />
          <path d="M2 7.5h12M2 9.5h12M2 11.5h12" stroke="#c0ffff" strokeDasharray="2 1" />
        </Launch>
        <Launch label="Trova">
          <path d="M1 2h13v12H1z" fill="#ffe060" />
          <circle cx="7" cy="7" r="4" fill="#c0ffff" stroke="#0000c0" />
          <path d="M10 10l5 5" stroke="#c06000" strokeWidth="2" />
        </Launch>
        <Launch label="Blocco note">
          <path d="M1.5 2.5h12v12h-12z" fill="#e0f0e8" stroke="#808080" />
          <path d="M4 12l7-8 2 2-7 7z" fill="#ffe080" stroke="#000" />
        </Launch>
      </div>
      <div className="mr-px"><Grip /></div>
      <Tray />
      <div role="tooltip" className="absolute -top-[5px] left-[270px] flex h-[18px] items-center border border-black bg-[#ffffe1] px-px font-['Liberation_Sans',Arial,sans-serif] text-[11px] leading-4 whitespace-nowrap">
        Documento15 - Microsoft Word
      </div>
    </div>
  );
}

export default function App() {
  return (
    <div className="flex h-screen min-h-[400px] w-full flex-col overflow-hidden bg-[#c0c0c0] font-['DejaVu_Sans_Condensed','DejaVu_Sans',Tahoma,sans-serif] text-[10px] text-black">
      <TitleBar />
      <MenuBar />
      <FormatBar />
      <StandardBar />
      <Workspace />
      <DrawingBar />
      <StatusBar />
      <TaskBar />
    </div>
  );
}
